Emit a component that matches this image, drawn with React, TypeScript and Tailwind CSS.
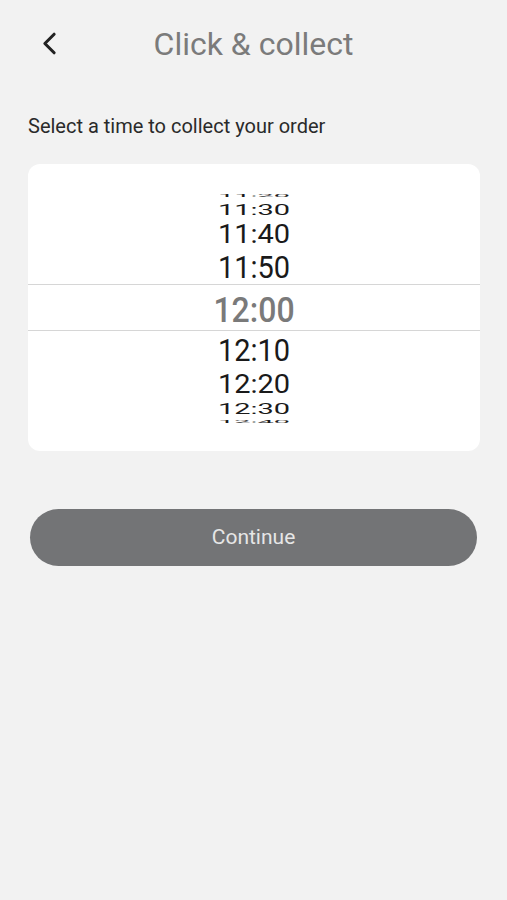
import { ChevronLeft } from 'lucide-react';

type Row = { label: string; h: string; scale: string; selected?: boolean };

// rows of the wheel, squashed toward the edges like a rotating drum
const rows: Row[] = [
  { label: '11:20', h: 'h-[8.5px]', scale: 'scale-y-[0.12]' },
  { label: '11:30', h: 'h-[19px]', scale: 'scale-y-[0.52]' },
  { label: '11:40', h: 'h-[31.5px]', scale: 'scale-y-[0.86]' },
  { label: '11:50', h: 'h-[35px]', scale: 'scale-y-[1.05]' },
  { label: '12:00', h: 'h-[47px]', scale: 'scale-y-[1.12]', selected: true },
  { label: '12:10', h: 'h-[37px]', scale: 'scale-y-[1.05]' },
  { label: '12:20', h: 'h-[30.5px]', scale: 'scale-y-[0.86]' },
  { label: '12:30', h: 'h-[17.5px]', scale: 'scale-y-[0.5]' },
  { label: '12:40', h: 'h-[8px]', scale: 'scale-y-[0.12]' },
];

export default function App() {
  return (
    <div className="min-h-[900px] bg-[#f2f2f2] font-['Roboto',sans-serif]">
      <header className="relative flex items-center justify-center h-[88px]">
        <button className="absolute left-[31px] top-[25px] text-[#222]">
          <ChevronLeft className="w-[37px] h-[37px]" strokeWidth={2} />
        </button>
        <h1 className="text-[32px] text-[#7b7b7b] leading-none">Click &amp; collect</h1>
      </header>

      <p className="px-[28px] mt-[28px] text-[20px] leading-none text-[#2a2a2a]">
        Select a time to collect your order
      </p>

      <div className="mx-[28px] w-[452px] mt-[28px] h-[287px] bg-white rounded-[12px] pt-[26px] overflow-hidden">
        {rows.map((r) => (
          <div
            key={r.label}
            className={`flex items-center justify-center ${r.h} ${
              r.selected ? 'border-y border-[#d6d6d6]' : ''
            }`}
          >
            <span
              className={`${r.scale} translate-y-[1.5px] leading-none ${
                r.selected ? 'text-[32px] font-medium text-[#7a7a7a]' : 'text-[29px] text-[#1a1a1a]'
              }`}
            >
              {r.label}
            </span>
          </div>
        ))}
      </div>

      <div className="px-[30px] mt-[58px]">
        <button className="w-[447px] h-[57px] rounded-full bg-[#737476] text-[21px] text-[#e6e6e6]">
          Continue
        </button>
      </div>
    </div>
  );
}
